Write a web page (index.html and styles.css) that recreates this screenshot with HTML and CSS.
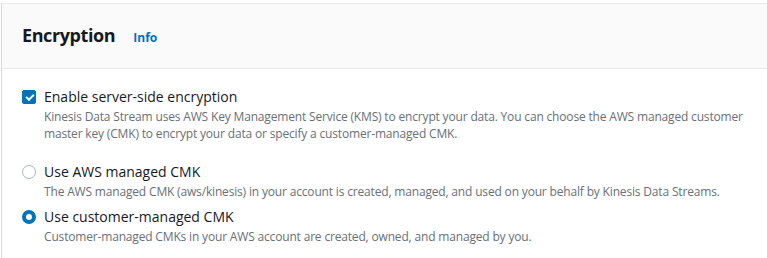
FILE: index.html
```html
<!DOCTYPE html>
<html lang="en">
<head>
  <meta charset="UTF-8" />
  <title>Encryption</title>
  <link rel="stylesheet" href="styles.css">
</head>
<body>
  <div class="panel">
    <div class="panel-header">
      <h2>Encryption</h2>
      <a class="info-link" href="#">Info</a>
    </div>

    <div class="panel-body">
      <label class="option">
        <input type="checkbox" checked />
        <span class="box"></span>
        <span class="option-text">
          <span class="option-label">Enable server-side encryption</span>
          <span class="option-desc">Kinesis Data Stream uses AWS Key Management Service (KMS) to encrypt your data. You can choose the AWS managed customer master key (CMK) to encrypt your data or specify a customer-managed CMK.</span>
        </span>
      </label>

      <div class="radio-group">
        <label class="option">
          <input type="radio" name="cmk" />
          <span class="dot"></span>
          <span class="option-text">
            <span class="option-label">Use AWS managed CMK</span>
            <span class="option-desc">The AWS managed CMK (aws/kinesis) in your account is created, managed, and used on your behalf by Kinesis Data Streams.</span>
          </span>
        </label>
        <label class="option">
          <input type="radio" name="cmk" checked />
          <span class="dot"></span>
          <span class="option-text">
            <span class="option-label">Use customer-managed CMK</span>
            <span class="option-desc">Customer-managed CMKs in your AWS account are created, owned, and managed by you.</span>
          </span>
        </label>
      </div>
    </div>
  </div>
</body>
</html>
```

FILE: styles.css
```css
* {
  margin: 0;
  padding: 0;
  box-sizing: border-box;
  font-family: 'Open Sans', sans-serif;
}

body {
  background: #fff;
  overflow: hidden;
}

.panel {
  margin: 3px -4px 0 1px;
  border-top: 1px solid #eaeded;
  border-left: 1px solid #d5dbdb;
  background: #fff;
  height: 260px;
}

.panel-header {
  display: flex;
  align-items: baseline;
  gap: 18px;
  padding: 19px 20px 0 20px;
  height: 65px;
  background: #fafafa;
  border-bottom: 1px solid #eaeded;
}

h2 {
  font-size: 18px;
  font-weight: 700;
  letter-spacing: -0.4px;
  color: #16191f;
}

.info-link {
  font-size: 12px;
  font-weight: 700;
  color: #0073bb;
  text-decoration: none;
}

.panel-body {
  padding: 17px 20px 0 20px;
}

.option {
  display: flex;
  gap: 8px;
  cursor: pointer;
}

.option input {
  display: none;
}

.box,
.dot {
  flex: none;
  width: 14px;
  height: 14px;
  margin-top: 4px;
  position: relative;
}

.box {
  border-radius: 2px;
  border: 1px solid #879596;
}

input:checked + .box {
  background: #0073bb;
  border-color: #0073bb;
}

input:checked + .box::after {
  content: '';
  position: absolute;
  left: 2px;
  top: 1px;
  width: 6px;
  height: 3px;
  border-left: 2px solid #fff;
  border-bottom: 2px solid #fff;
  transform: translate(1px, 2px) rotate(-45deg);
}

.dot {
  border-radius: 50%;
  border: 1px solid #aab7b8;
}

input:checked + .dot {
  border: 4px solid #0073bb;
}

.option-text {
  display: flex;
  flex-direction: column;
}

.option-label {
  font-size: 14px;
  line-height: 22px;
  color: #16191f;
}

.option-desc {
  font-size: 12px;
  line-height: 17px;
  letter-spacing: -0.17px;
  color: #687078;
}

.radio-group {
  margin-top: 19px;
  display: flex;
  flex-direction: column;
  gap: 6px;
}
```
